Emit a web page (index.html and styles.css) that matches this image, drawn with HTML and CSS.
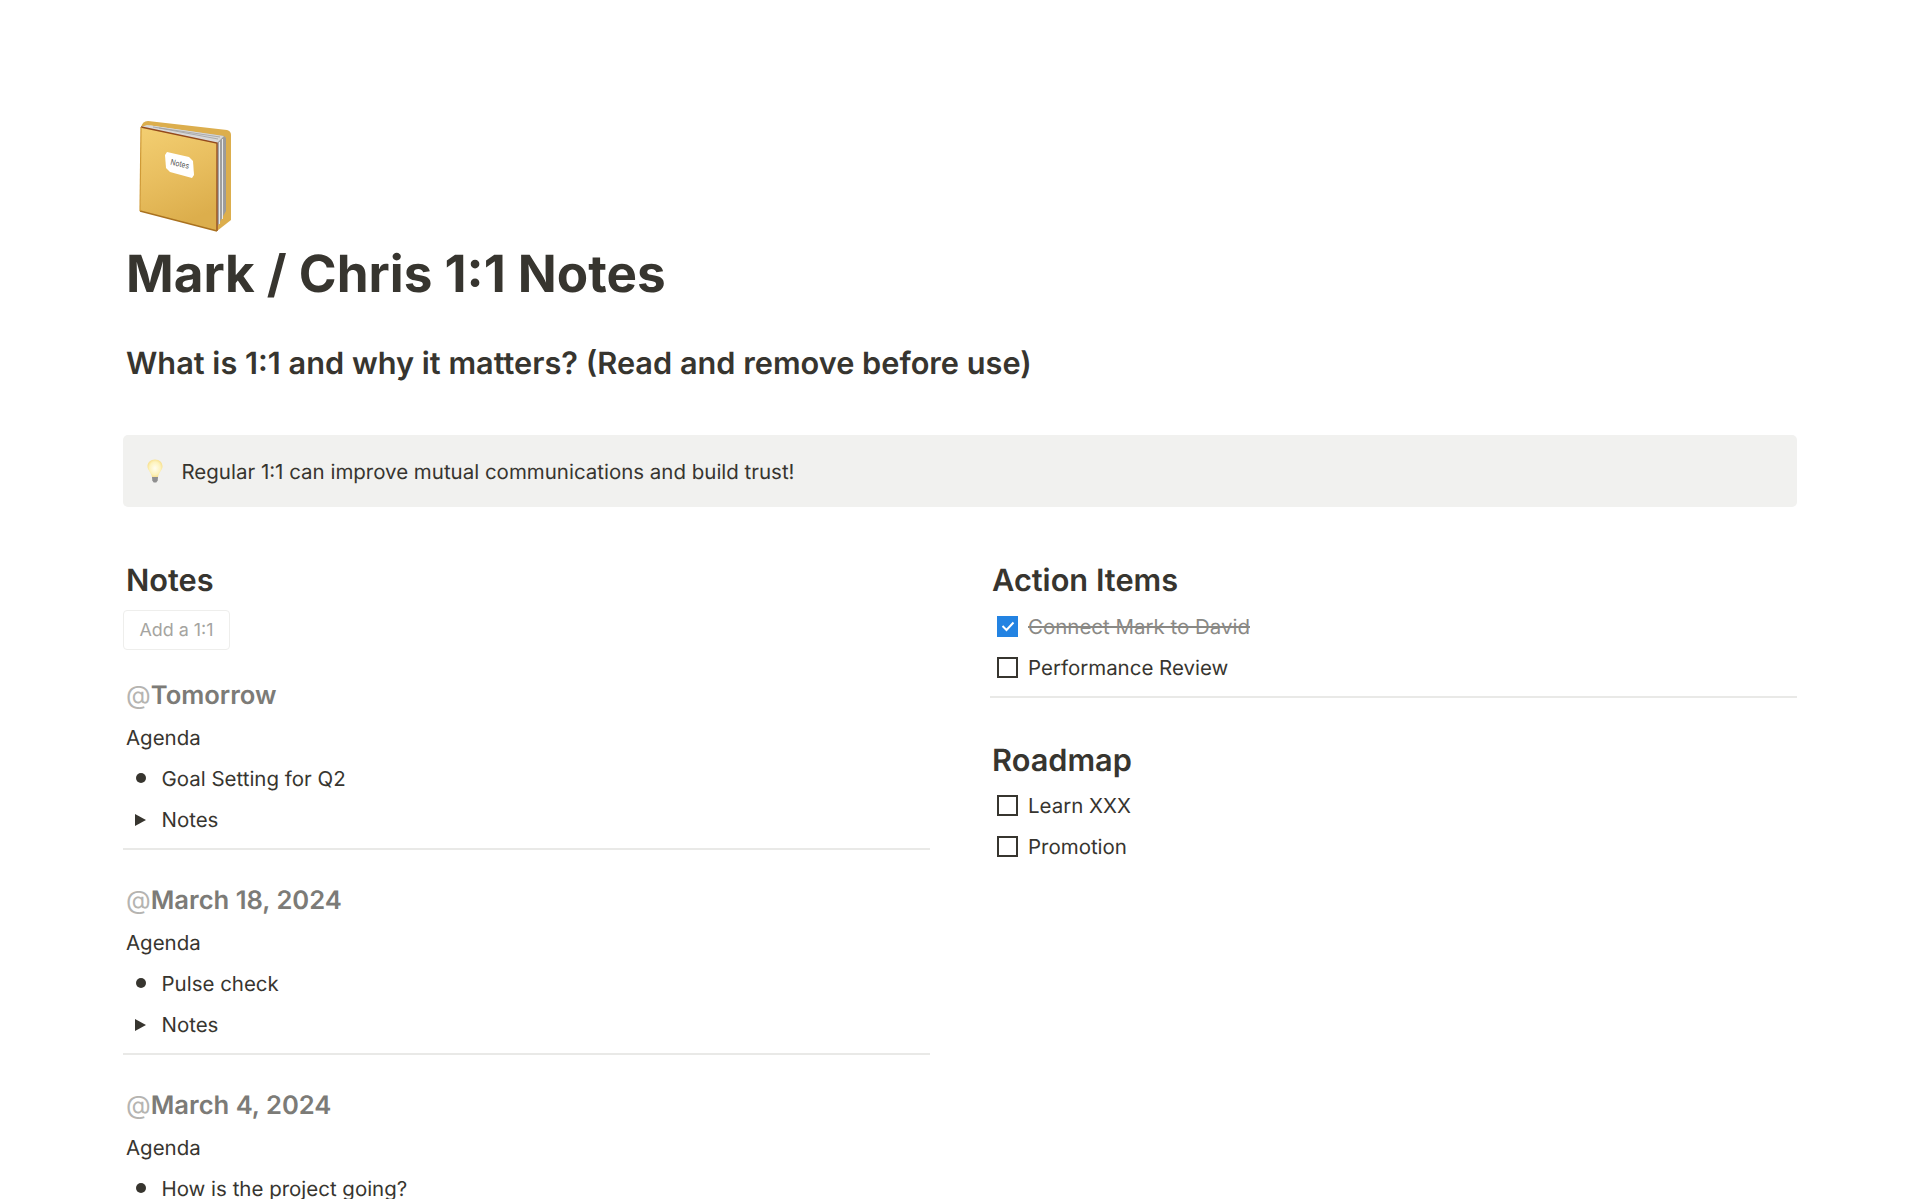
FILE: index.html
```html
<!DOCTYPE html>
<html lang="en">
<head>
<meta charset="utf-8">
<title>Mark / Chris 1:1 Notes</title>
<link rel="stylesheet" href="styles.css">
</head>
<body>
<main class="page">
  <div class="page-icon">
    <svg width="96" height="114" viewBox="0 0 96 114" aria-hidden="true">
      <defs>
        <linearGradient id="cover" x1="0" y1="0" x2="0.3" y2="1">
          <stop offset="0" stop-color="#f3cf72"/>
          <stop offset="0.5" stop-color="#e9bf60"/>
          <stop offset="1" stop-color="#dcae4c"/>
        </linearGradient>
        <linearGradient id="pages" x1="0" y1="0" x2="1" y2="0">
          <stop offset="0" stop-color="#f7f7f7"/>
          <stop offset="0.5" stop-color="#c4c4c4"/>
          <stop offset="1" stop-color="#9a9a9a"/>
        </linearGradient>
      </defs>
      <path d="M2 8 Q3 1 9 1 L88 10 Q92 11 92 15 L92 100 L78 111 Z" fill="#dcae4d"/>
      <path d="M8 5 L85 16 L87 18 L87 91 L78 107 L78 23 Z" fill="url(#pages)"/>
      <path d="M8 5 L85 16 L78 23 L2 7 Z" fill="#d8d8d8"/>
      <path d="M14 7 L81 17 M20 8 L79 19" stroke="#9f9f9f" stroke-width="0.8" fill="none"/>
      <path d="M80.5 22 L80.5 104 M83.5 19 L83.5 99" stroke="#e9e9e9" stroke-width="1" fill="none"/>
      <path d="M2 7 L78 23 L78 111 L1 91 Z" fill="url(#cover)"/>
      <path d="M2 7 L78 23 L78 111" fill="none" stroke="#93491c" stroke-width="1.3"/>
      <path d="M1 91 L78 111" fill="none" stroke="#a9711f" stroke-width="1.4"/>
      <path d="M2 7 L1 91" fill="none" stroke="#cf9a36" stroke-width="1.2"/>
      <path d="M28 32 L50 37 L54 41 L55 55 L53 58 L31 52 L27 48 L26 35 Z" fill="#fff"/>
      <text class="label" x="0" y="0" transform="translate(31 44.5) rotate(13) scale(0.85 1)">Notes</text>
    </svg>
  </div>
  <h1 class="title">Mark / Chris 1:1 Notes</h1>
  <h2 class="subtitle">What is 1:1 and why it matters? (Read and remove before use)</h2>
  <div class="callout">
    <svg class="bulb" width="16" height="24" viewBox="0 0 16 24" aria-hidden="true">
      <defs>
        <radialGradient id="glass" cx="0.5" cy="0.5" r="0.6">
          <stop offset="0" stop-color="#fffdf0"/>
          <stop offset="0.6" stop-color="#fdf3bd"/>
          <stop offset="1" stop-color="#f5d778"/>
        </radialGradient>
      </defs>
      <path d="M8 0.5 C3.5 0.5 0.5 3.6 0.5 7.5 C0.5 11 4 13 5 18 L11 18 C12 13 15.5 11 15.5 7.5 C15.5 3.6 12.5 0.5 8 0.5 Z" fill="url(#glass)"/>
      <path d="M5 18 L11 18 L10.7 21.5 L9.3 23.5 L6.7 23.5 L5.3 21.5 Z" fill="#8f8f8f"/>
    </svg>
    <span>Regular 1:1 can improve mutual communications and build trust!</span>
  </div>
  <div class="columns">
    <section class="col">
      <h3 class="heading">Notes</h3>
      <div class="add-btn">Add a 1:1</div>
      <article class="meeting">
        <h4 class="date"><span class="at">@</span>Tomorrow</h4>
        <div class="row"><span class="plain">Agenda</span></div>
        <div class="row"><span class="marker"><i class="dot"></i></span>Goal Setting for Q2</div>
        <div class="row"><span class="marker"><i class="tri"></i></span>Notes</div>
        <hr class="rule">
      </article>
      <article class="meeting">
        <h4 class="date"><span class="at">@</span>March 18, 2024</h4>
        <div class="row"><span class="plain">Agenda</span></div>
        <div class="row"><span class="marker"><i class="dot"></i></span>Pulse check</div>
        <div class="row"><span class="marker"><i class="tri"></i></span>Notes</div>
        <hr class="rule">
      </article>
      <article class="meeting">
        <h4 class="date"><span class="at">@</span>March 4, 2024</h4>
        <div class="row"><span class="plain">Agenda</span></div>
        <div class="row"><span class="marker"><i class="dot"></i></span>How is the project going?</div>
      </article>
    </section>
    <section class="col">
      <h3 class="heading">Action Items</h3>
      <div class="todos">
        <div class="row"><span class="marker"><i class="box checked"><svg width="16" height="16" viewBox="0 0 16 16" aria-hidden="true"><path d="M2.5 8 L6.5 12 L13.5 4.5" fill="none" stroke="#fff" stroke-width="2"/></svg></i></span><s class="done">Connect Mark to David</s></div>
        <div class="row"><span class="marker"><i class="box"></i></span>Performance Review</div>
      </div>
      <hr class="rule">
      <h3 class="heading second">Roadmap</h3>
      <div class="todos tight">
        <div class="row"><span class="marker"><i class="box"></i></span>Learn XXX</div>
        <div class="row"><span class="marker"><i class="box"></i></span>Promotion</div>
      </div>
    </section>
  </div>
</main>
</body>
</html>
```
FILE: styles.css
```css
html, body {
  margin: 0;
  height: 100%;
  overflow: hidden;
  background: #fff;
}
body {
  font-family: Inter, "Noto Sans", sans-serif;
  color: #37352f;
  font-size: 20.48px;
  text-rendering: geometricPrecision;
}
.page {
  padding: 120px 123px 0;
}
.page-icon {
  height: 114px;
  padding-left: 16px;
}
.page-icon svg { display: block; }
.label {
  font-size: 8px;
  fill: #555;
}
.title {
  margin: 10px 0 0;
  padding-left: 3px;
  font-size: 51.2px;
  line-height: 60px;
  font-weight: 700;
}
.subtitle {
  margin: 38px 0 0;
  padding-left: 3px;
  font-size: 30.72px;
  line-height: 44px;
  font-weight: 600;
}
.callout {
  display: flex;
  align-items: center;
  gap: 18.5px;
  height: 72px;
  margin-top: 49px;
  padding-left: 24px;
  background: #f1f1ef;
  border-radius: 5px;
}
.bulb { flex: none; }
.columns {
  display: grid;
  grid-template-columns: 807px 807px;
  column-gap: 60px;
  margin-top: 51px;
}
.heading {
  margin: 0;
  padding-left: 3px;
  font-size: 30.72px;
  line-height: 46px;
  font-weight: 600;
}
.col + .col .heading { padding-left: 2px; }
.heading.second { margin-top: 40px; }
.add-btn {
  box-sizing: border-box;
  width: 107px;
  height: 40px;
  margin-top: 6px;
  border: 1px solid #eeeeec;
  border-radius: 4px;
  color: #a5a4a0;
  font-size: 17.92px;
  line-height: 40px;
  text-align: center;
}
.meeting { padding-top: 24px; }
.meeting + .meeting { padding-top: 29px; }
.date {
  margin: 0;
  padding-left: 3px;
  font-size: 25.6px;
  line-height: 43px;
  font-weight: 600;
  color: #7c7b77;
}
.at { color: #b5b4b1; font-weight: 400; }
.row {
  display: flex;
  align-items: center;
  height: 41px;
  padding-left: 3px;
  white-space: nowrap;
}
.marker {
  display: flex;
  align-items: center;
  flex: none;
  width: 35.5px;
  height: 24px;
  padding-left: 8px;
  box-sizing: border-box;
}
.col + .col .marker { width: 35px; padding-left: 4px; }
.plain { display: block; }
.dot {
  width: 10px;
  height: 10px;
  margin-left: 2px;
  margin-top: -2px;
  border-radius: 50%;
  background: #37352f;
}
.tri {
  width: 0;
  height: 0;
  margin-left: 1px;
  border-left: 11px solid #37352f;
  border-top: 6px solid transparent;
  border-bottom: 6px solid transparent;
}
.box {
  box-sizing: border-box;
  display: flex;
  align-items: center;
  justify-content: center;
  width: 21px;
  height: 21px;
  border: 2px solid #37352f;
}
.box.checked {
  margin-top: -1px;
  background: #2383e2;
  border: 0;
}
.done {
  color: #8a8985;
  text-decoration: line-through;
}
.todos { margin-top: 2px; }
.todos.tight { margin-top: 1px; }
.rule {
  height: 2px;
  margin: 8px 0 0;
  border: 0;
  background: #e9e9e7;
}
```
